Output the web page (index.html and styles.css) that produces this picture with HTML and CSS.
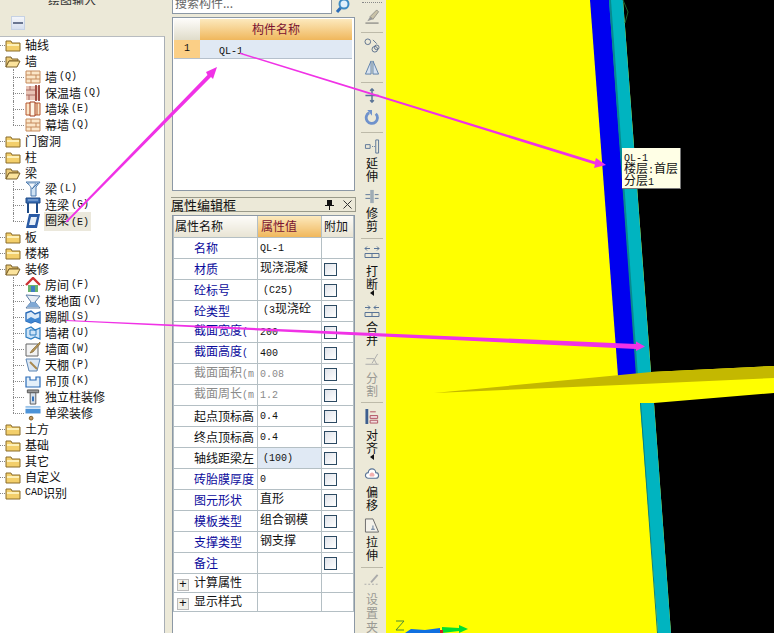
FILE: index.html
```html
<!DOCTYPE html>
<html lang="zh">
<head>
<meta charset="utf-8">
<title>绘图输入</title>
<link rel="stylesheet" href="styles.css">
</head>
<body>
<svg class="defs" width="0" height="0" aria-hidden="true">
  <defs>
    <symbol id="fc" viewBox="0 0 16 14"><path d="M1 3h5l1 2h8v8H1z" fill="#f3cf6b" stroke="#8a6d2b"/><path d="M2 6h12v2H2z" fill="#fdf0b8"/></symbol>
    <symbol id="fo" viewBox="0 0 16 14"><path d="M1 3h5l1 2h6v2H4L1 13z" fill="#eccb78" stroke="#7a6028"/><path d="M4 7h11l-3 6H1z" fill="#fbe39c" stroke="#7a6028"/></symbol>
    <symbol id="brick" viewBox="0 0 16 16"><path d="M1 2h14v12H1z" fill="#fbe6c8" stroke="#c58a5c"/><path d="M1 6h14M1 10h14M6 2v4M11 6v4M6 10v4" stroke="#c58a5c" fill="none"/></symbol>
    <symbol id="ins" viewBox="0 0 16 16"><path d="M1 1h14v14H1z" fill="#e8c3b5"/><path d="M1 5h9M1 10h9M5 1v4M4 10v5" stroke="#a96b62"/><path d="M11 0v16M14 0v16" stroke="#8a2a20" stroke-width="1.5"/></symbol>
    <symbol id="pier" viewBox="0 0 16 16"><path d="M1 2h14v12H1z" fill="#fbe6c8" stroke="#b5562e"/><path d="M5 1h5v14H5z" fill="#fff5e5" stroke="#a23c1d"/><path d="M12 2v12" stroke="#b5562e"/></symbol>
    <symbol id="beam" viewBox="0 0 16 16"><path d="M1 1h14l-4 5v9H6V6z" fill="#cfe2f3" stroke="#4a78ad"/><path d="M3 2l8 0-4 6z" fill="#f4f8fc" stroke="#7d9fc4"/><path d="M7 8L13 2" stroke="#4a78ad"/></symbol>
    <symbol id="lbeam" viewBox="0 0 16 16"><path d="M1 1h14v5H1z" fill="#3c6fb4" stroke="#1f4a86"/><path d="M3 3h10" stroke="#9fc0e6"/><path d="M3 6v10M12 6v10" stroke="#1f4a86" stroke-width="2"/></symbol>
    <symbol id="ring" viewBox="0 0 16 16"><path d="M4 1h11l-3 14H1z" fill="#2b5ba5"/><path d="M6 4h6l-2 8H4z" fill="#e8f0f8"/></symbol>
    <symbol id="room" viewBox="0 0 16 16"><path d="M1 8L8 1l7 7" fill="none" stroke="#c33" stroke-width="2.4"/><path d="M3 8h10v7H3z" fill="#6bb36d"/><path d="M6 9h4v6H6z" fill="#3f7fc4"/></symbol>
    <symbol id="floor" viewBox="0 0 16 16"><path d="M1 2l14 1-5 6 5 6H1l5-6z" fill="#e8eef5" stroke="#5d7ea6"/><path d="M2 14l4-5h4l4 5z" fill="#7fa8d4"/></symbol>
    <symbol id="skirt" viewBox="0 0 16 16"><path d="M1 4l5-2 4 3 5-2v11l-5-2-4 2-5-2z" fill="#dbe9f7" stroke="#2b6cb8" stroke-width="1.4"/><path d="M1 11l5-3 4 2 5-2v6l-5-2-4 2-5-2z" fill="#3f86d1"/></symbol>
    <symbol id="dado" viewBox="0 0 16 16"><path d="M1 4l5-2 4 3 5-2v11l-5-2-4 2-5-2z" fill="#cfe4f7" stroke="#2b7cc0" stroke-width="1.2"/><path d="M5 5h6v5H5z" fill="none" stroke="#2b7cc0"/></symbol>
    <symbol id="wface" viewBox="0 0 16 16"><path d="M1 3h12v12H1z" fill="#f3f3f3" stroke="#666"/><path d="M15 1L7 9l-2 3 3-1 7-8z" fill="#b5965a" stroke="#7a5d25" stroke-width=".6"/></symbol>
    <symbol id="ceil" viewBox="0 0 16 16"><path d="M1 2h14l-3 12H4z" fill="#dbe7f4" stroke="#5d85b3"/><path d="M5 5l7 7" stroke="#a9884e" stroke-width="2"/></symbol>
    <symbol id="susp" viewBox="0 0 16 16"><path d="M1 4h4v3h6V4h4v10H1z" fill="#e3eff9" stroke="#2b6cb8" stroke-width="1.2"/></symbol>
    <symbol id="col" viewBox="0 0 16 17"><path d="M2 1h12v3H2z" fill="#999" stroke="#555"/><path d="M5 4h6v12H5z" fill="#d5dfe9" stroke="#555"/><path d="M7 8h2v5H7z" fill="#2b6cb8"/></symbol>
    <symbol id="sbeam" viewBox="0 0 16 17"><path d="M0 4h16v5H0z" fill="#4c93d8"/><path d="M0 1h16v2H0z" fill="#9cc4e8"/><circle cx="6" cy="14" r="2" fill="#c39660" stroke="#7a5d25"/></symbol>
  </defs>
</svg>
<div class="app">
  <aside class="nav">
    <div class="nav-title">绘图输入</div>
    <div class="nav-tools"><span class="collapse"></span></div>
    <ul class="tree">
      <li class="node"><svg class="folder"><use href="#fc"/></svg>轴线</li>
      <li class="node"><svg class="folder"><use href="#fo"/></svg>墙</li>
      <li class="leaf"><svg class="ico"><use href="#brick"/></svg>墙<span class="lat key">(Q)</span></li>
      <li class="leaf"><svg class="ico"><use href="#ins"/></svg>保温墙<span class="lat key">(Q)</span></li>
      <li class="leaf"><svg class="ico"><use href="#pier"/></svg>墙垛<span class="lat key">(E)</span></li>
      <li class="leaf end"><svg class="ico"><use href="#brick"/></svg>幕墙<span class="lat key">(Q)</span></li>
      <li class="node"><svg class="folder"><use href="#fc"/></svg>门窗洞</li>
      <li class="node"><svg class="folder"><use href="#fc"/></svg>柱</li>
      <li class="node"><svg class="folder"><use href="#fo"/></svg>梁</li>
      <li class="leaf"><svg class="ico"><use href="#beam"/></svg>梁<span class="lat key">(L)</span></li>
      <li class="leaf"><svg class="ico"><use href="#lbeam"/></svg>连梁<span class="lat key">(G)</span></li>
      <li class="leaf end"><svg class="ico"><use href="#ring"/></svg><span class="sel">圈梁<span class="lat key">(E)</span></span></li>
      <li class="node"><svg class="folder"><use href="#fc"/></svg>板</li>
      <li class="node"><svg class="folder"><use href="#fc"/></svg>楼梯</li>
      <li class="node"><svg class="folder"><use href="#fo"/></svg>装修</li>
      <li class="leaf"><svg class="ico"><use href="#room"/></svg>房间<span class="lat key">(F)</span></li>
      <li class="leaf"><svg class="ico"><use href="#floor"/></svg>楼地面<span class="lat key">(V)</span></li>
      <li class="leaf"><svg class="ico"><use href="#skirt"/></svg>踢脚<span class="lat key">(S)</span></li>
      <li class="leaf"><svg class="ico"><use href="#dado"/></svg>墙裙<span class="lat key">(U)</span></li>
      <li class="leaf"><svg class="ico"><use href="#wface"/></svg>墙面<span class="lat key">(W)</span></li>
      <li class="leaf"><svg class="ico"><use href="#ceil"/></svg>天棚<span class="lat key">(P)</span></li>
      <li class="leaf"><svg class="ico"><use href="#susp"/></svg>吊顶<span class="lat key">(K)</span></li>
      <li class="leaf"><svg class="ico"><use href="#col"/></svg>独立柱装修</li>
      <li class="leaf end"><svg class="ico"><use href="#sbeam"/></svg>单梁装修</li>
      <li class="node"><svg class="folder"><use href="#fc"/></svg>土方</li>
      <li class="node"><svg class="folder"><use href="#fc"/></svg>基础</li>
      <li class="node"><svg class="folder"><use href="#fc"/></svg>其它</li>
      <li class="node"><svg class="folder"><use href="#fc"/></svg>自定义</li>
      <li class="node"><svg class="folder"><use href="#fc"/></svg><span class="lat cad">CAD</span>识别</li>
    </ul>
  </aside>

  <section class="mid">
    <div class="search">
      <div class="search-input">搜索构件...</div>
      <div class="search-btn"><svg width="16" height="14" viewBox="0 0 16 14"><circle cx="9" cy="4" r="4.5" fill="#dff0fb" stroke="#3b8ac4" stroke-width="2"/><path d="M5.500 8L2 12" stroke="#2b6cb8" stroke-width="3"/></svg></div>
    </div>
    <div class="list">
      <div class="list-head"><div class="corner"></div><div class="list-title">构件名称</div></div>
      <div class="list-row"><div class="row-no">1</div><div class="row-name"><span class="lat">QL-1</span></div></div>
    </div>
    <div class="prop-title"><span>属性编辑框</span><span class="prop-actions"><svg width="9" height="10" viewBox="0 0 9 10"><path d="M2 0h5v5h2v1H5v4H4V6H0V5h2z" fill="#111"/></svg><svg width="9" height="9" viewBox="0 0 9 9"><path d="M.5.5l8 8M8.500.5l-8 8" stroke="#333" fill="none"/></svg></span></div>
    <div class="prop-wrap">
      <table class="prop">
        <colgroup><col class="c1"><col class="c2"><col class="c3"></colgroup>
        <thead><tr><th class="h1">属性名称</th><th class="h2">属性值</th><th class="h3">附加</th></tr></thead>
        <tbody>
          <tr><td class="name blue">名称</td><td class="val"><span class="lat">QL-1</span></td><td></td></tr>
          <tr><td class="name blue">材质</td><td class="val up">现浇混凝</td><td class="chk"><i></i></td></tr>
          <tr><td class="name blue">砼标号</td><td class="val"><span class="lat pad">(C25)</span></td><td class="chk"><i></i></td></tr>
          <tr><td class="name blue">砼类型</td><td class="val up"><span class="lat pad">(3</span>现浇砼</td><td class="chk"><i></i></td></tr>
          <tr><td class="name blue">截面宽度<span class="lat">(</span></td><td class="val"><span class="lat">200</span></td><td class="chk"><i></i></td></tr>
          <tr><td class="name blue">截面高度<span class="lat">(</span></td><td class="val"><span class="lat">400</span></td><td class="chk"><i></i></td></tr>
          <tr class="off"><td class="name">截面面积<span class="lat">(m</span></td><td class="val"><span class="lat">0.08</span></td><td class="chk"><i></i></td></tr>
          <tr class="off"><td class="name">截面周长<span class="lat">(m</span></td><td class="val"><span class="lat">1.2</span></td><td class="chk"><i></i></td></tr>
          <tr><td class="name">起点顶标高</td><td class="val"><span class="lat">0.4</span></td><td class="chk"><i></i></td></tr>
          <tr><td class="name">终点顶标高</td><td class="val"><span class="lat">0.4</span></td><td class="chk"><i></i></td></tr>
          <tr><td class="name">轴线距梁左</td><td class="val hi"><span class="lat pad">(100)</span></td><td class="chk"><i></i></td></tr>
          <tr><td class="name blue">砖胎膜厚度</td><td class="val"><span class="lat">0</span></td><td class="chk"><i></i></td></tr>
          <tr><td class="name blue">图元形状</td><td class="val up">直形</td><td class="chk"><i></i></td></tr>
          <tr><td class="name blue">模板类型</td><td class="val up">组合钢模</td><td class="chk"><i></i></td></tr>
          <tr><td class="name blue">支撑类型</td><td class="val up">钢支撑</td><td class="chk"><i></i></td></tr>
          <tr><td class="name blue">备注</td><td class="val"></td><td class="chk"><i></i></td></tr>
          <tr class="group"><td class="name"><b class="plus">+</b>计算属性</td><td></td><td></td></tr>
          <tr class="group"><td class="name"><b class="plus">+</b>显示样式</td><td></td><td></td></tr>
        </tbody>
      </table>
    </div>
  </section>

  <nav class="tools">
    <div class="grip"></div>
    <div class="tool m6"><svg viewBox="0 0 16 16"><path d="M1 15h14" stroke="#666"/><path d="M3 13l3-5 3 3z" fill="#999"/><path d="M6 8l7-7 2 2-6 8z" fill="#c9c2a8" stroke="#777" stroke-width=".7"/></svg></div>
    <div class="sep m8"></div>
    <div class="tool m5"><svg viewBox="0 0 16 16" fill="none" stroke="#5b6f8c"><circle cx="3.500" cy="4" r="3"/><circle cx="11" cy="12" r="3"/><circle cx="13" cy="10" r="2.500"/><path d="M9 2l4 4"/></svg></div>
    <div class="tool m7"><svg viewBox="0 0 16 16"><path d="M7 1v14H1z" fill="#d7e2ef" stroke="#5b7ea8"/><path d="M9 1v14h6z" fill="#d7e2ef" stroke="#5b7ea8"/></svg></div>
    <div class="sep m7"></div>
    <div class="tool m5"><svg viewBox="0 0 16 16" fill="none" stroke="#5a7496" stroke-width="1.600"><path d="M8 1v14M1 8h14M6 3l2-2 2 2M6 13l2 2 2-2"/></svg></div>
    <div class="tool m7"><svg viewBox="0 0 16 16" fill="none"><path d="M5 3a6 6 0 1 0 7 1" stroke="#6f92cc" stroke-width="3"/><path d="M3 0h5v6z" fill="#6f92cc"/></svg></div>
    <div class="sep m7"></div>
    <div class="tool m6 g3"><svg viewBox="0 0 16 16" fill="none" stroke="#5a7496"><path d="M12 1h3v14h-3z"/><path d="M1 6h5v4H1z"/><path d="M8 8h3" stroke-dasharray="1 1"/></svg><span>延<br>伸</span></div>
    <div class="tool m7 g3"><svg viewBox="0 0 16 16" fill="none" stroke="#5a7496"><path d="M7 1v14M9 1v14M1 6h5M1 10h5M11 6h4M11 10h4"/></svg><span>修<br>剪</span></div>
    <div class="sep m6"></div>
    <div class="tool m6 g5"><svg viewBox="0 0 16 14" fill="none" stroke="#5a7496"><path d="M1 3h5M10 3h5M3 1L1 3l2 2M13 1l2 2-2 2"/><path d="M1 8h14v4H1zM8 8v4"/></svg><span>打<br>断</span><em></em></div>
    <div class="tool m8 g2"><svg viewBox="0 0 16 14" fill="none" stroke="#5a7496"><path d="M1 3h5M10 3h5M4 1l2 2-2 2M12 1l-2 2 2 2"/><path d="M1 8h14v4H1zM8 8v4"/></svg><span>合<br>并</span></div>
    <div class="tool off m7 g4"><svg viewBox="0 0 16 16" fill="none" stroke="#aaa"><path d="M1 12h14M2 6h8l3 6M14 1l-6 10"/></svg><span>分<br>割</span></div>
    <div class="sep m5"></div>
    <div class="tool m6 g5"><svg viewBox="0 0 16 16"><path d="M1 0h3v16H1z" fill="#3d5f8f"/><path d="M6 3h6M6 7h8v3H6zM6 12h8v3H6z" fill="#f0dede" stroke="#b05060"/></svg><span>对<br>齐</span><em></em></div>
    <div class="tool m7 g4"><svg viewBox="0 0 16 16"><path d="M4 12a3 3 0 0 1 0-6 4 4 0 0 1 8 0 3 3 0 0 1 0 6z" fill="#fff" stroke="#5a7496" stroke-width="1.200"/><path d="M6 10a2 2 0 0 1 0-3 2.500 2.500 0 0 1 4 0 2 2 0 0 1 0 3z" fill="#f3b0b0"/></svg><span>偏<br>移</span></div>
    <div class="tool m7 g3"><svg viewBox="0 0 16 16" fill="none" stroke="#666"><path d="M1 1h8l6 14H1z" fill="#f4f2ea"/><path d="M9 8v4M7 12h4" stroke="#5a7496"/></svg><span>拉<br>伸</span></div>
    <div class="sep m6"></div>
    <div class="tool off m5 g4 tall"><svg viewBox="0 0 16 16" fill="none" stroke="#aaa"><path d="M0 12h16" stroke-dasharray="2 2"/><path d="M7 10L14 2" stroke-width="2"/></svg><span>设<br>置<br>夹<br>点</span></div>
  </nav>

  <main class="canvas">
    <svg class="scene" viewBox="386 0 388 633" preserveAspectRatio="none">
      <rect x="386" y="0" width="388" height="633" fill="#ffff00"/>
      <path d="M623 0H774V366L651 372Z" fill="#000"/>
      <path d="M654 403L774 393V633H671Z" fill="#000"/>
      <path d="M590 0H610L637 376H618Z" fill="#0000f0"/>
      <path d="M609 0H623L651 373L637 376Z" fill="#00b4c0"/>
      <path d="M609 0L611 0L638 376H636Z" fill="#078a8e"/>
      <path d="M640 403H654L671 633H658Z" fill="#00b4c0"/>
      <path d="M640 403H641L658 633H657Z" fill="#0a7f80"/>
      <path d="M434 393L620 375L651 372L774 366V378L620 385Z" fill="#c4b800"/>
      <path d="M623 0L628 12L625 23" fill="none" stroke="#1f5f2a"/>
      <path d="M396 621h8l-8 9h8" fill="none" stroke="#4a8a3a"/>
      <path d="M405 633L411 629L425 630L440 628V633Z" fill="#1070e0"/>
      <path d="M442 627L459 628V625L468 629L459 633V631L442 633Z" fill="#00e030"/>
      <path d="M440 630h3v3h-3z" fill="#d02020"/>
    </svg>
    <div class="tip"><div><span class="lat">QL-1</span></div><div>楼层<span class="lat">:</span>首层</div><div>分层<span class="lat">1</span></div></div>
  </main>

  <svg class="arrows" viewBox="0 0 774 633">
    <path d="M65.500 221.500L207.500 75L206 72L217 67L213 79L211 77L67 222.500Z" fill="#f032e6"/>
    <path d="M240 52.500L595 161.500L596 158L606 165L594 168L595 164.500L240 54Z" fill="#f032e6"/>
    <path d="M66 320L636 344L636 341.500L645 346.500L636 351L636 349L66 321Z" fill="#f032e6"/>
  </svg>
</div>
</body>
</html>
```
FILE: styles.css
```css
* { box-sizing: border-box; }
html, body { margin: 0; height: 100%; }
body { width: 774px; height: 633px; overflow: hidden; font: 12px/16px "Noto Sans CJK SC", "Liberation Sans", sans-serif; color: #111; background: #ece9d8; }
.defs { position: absolute; }
.lat { font-family: "Liberation Mono", monospace; font-size: 10px; }
.lat.pad { margin-left: 3px; }
.key { margin-left: 2px; }
.app { display: flex; position: relative; width: 774px; height: 633px; overflow: hidden; }

/* left tree */
.nav { width: 171px; flex: none; display: flex; flex-direction: column; border-right: 1px solid #ece9d8; background: #ece9d8; }
.nav-title { height: 5px; line-height: 0; padding-left: 48px; font-size: 12px; overflow: hidden; color: #333; }
.nav-tools { height: 31px; padding: 11px 0 0 11px; }
.collapse { display: block; width: 14px; height: 14px; border: 1px solid #c6d2e4; background: linear-gradient(#f4f6fa, #d6dfee); position: relative; }
.collapse::after { content: ""; position: absolute; left: 1px; right: 1px; top: 5px; height: 2px; background: #6a7690; }
.tree { flex: 1; width: 165px; margin: 0; padding: 0; list-style: none; background: #fff; border-right: 1px solid #a8aeb5; border-top: 1px solid #b8bcc0; }
.tree li { height: 16px; display: flex; align-items: center; white-space: nowrap; position: relative; }
.node { padding-left: 5px; }
.node::before { content: ""; position: absolute; left: 0; width: 5px; top: 8px; border-top: 1px dotted #888; }
.leaf { padding-left: 25px; }
.leaf::before { content: ""; position: absolute; left: 13px; width: 11px; top: 8px; border-top: 1px dotted #888; }
.leaf::after { content: ""; position: absolute; left: 13px; top: 0; bottom: 0; border-left: 1px dotted #888; }
.leaf.end::after { bottom: 8px; }
.folder { width: 16px; height: 14px; margin-right: 4px; flex: none; }
.ico { width: 16px; height: 16px; margin-right: 4px; flex: none; }
.sel { background: #ebe8dc; padding: 0 2px 0 1px; margin-left: -1px; }
.cad { font-size: 10px; }

/* middle */
.mid { width: 189px; flex: none; display: flex; flex-direction: column; padding-left: 1px; }
.search { height: 16px; margin-top: -1px; display: flex; width: 181px; }
.search-input { width: 160px; height: 15px; background: #fff; border: 1px solid #8c98a5; border-top: 0; color: #666; line-height: 8px; padding-left: 2px; overflow: hidden; }
.search-btn { width: 21px; height: 15px; display: flex; align-items: center; justify-content: center; background: #ece9d8; }
.list { width: 183px; height: 174px; margin-top: 2px; background: #fff; border: 1px solid #8c98a5; padding: 1px 1px 0 1px; }
.list-head { display: flex; height: 21px; }
.corner { width: 26px; background: linear-gradient(#fdfcf9, #e0dcca); }
.list-title { flex: 1; margin-right: 1px; background: linear-gradient(#fce9bd, #f0b75c); color: #7a1230; text-align: center; line-height: 20px; }
.list-row { display: flex; height: 19px; margin-right: 1px; border-bottom: 1px solid #b5c0cc; }
.row-no { width: 26px; background: #fbcf86; text-align: center; line-height: 18px; font-family: "Liberation Mono", monospace; font-size: 10px; }
.row-name { flex: 1; background: #e0e9f4; padding-left: 19px; line-height: 17px; }
.prop-title { width: 185px; height: 15px; margin-top: 6px; margin-left: -1px; background: #ece9d8; border: 1px solid #9a9a8a; border-left: 0; display: flex; justify-content: space-between; align-items: center; font-size: 13px; padding-right: 3px; }
.prop-actions { display: flex; gap: 9px; align-items: center; }
.prop-wrap { flex: 1; width: 183px; margin-top: 3px; background: #fff; border: 1px solid #8c98a5; border-bottom: 0; }
.prop { width: 180px; table-layout: fixed; border-collapse: collapse; }
.c1 { width: 84px; } .c2 { width: 64px; } .c3 { width: 32px; }
.prop th { height: 21px; padding: 0; font-weight: normal; border: 1px solid #b4bfc4; border-top: 0; font-size: 12px; text-align: left; }
.h1 { background: linear-gradient(#fdfcf9, #e8e4d4); padding-left: 1px !important; }
.h2 { background: linear-gradient(#fce9bd, #f0b75c); color: #7a1230; padding-left: 3px !important; }
.h3 { background: linear-gradient(#fdfcf9, #e8e4d4); padding-left: 2px !important; }
.prop td { height: 21px; padding: 0; border: 1px solid #b4bfc4; white-space: nowrap; overflow: hidden; line-height: 14px; }
.name { padding-left: 20px !important; }
.val { padding-left: 2px !important; }
.up { padding-bottom: 3px !important; }
.blue { color: #0a0a9c; }
.off td { color: #8a8a8a; }
.hi { background: #e0e9f4; }
.chk { text-align: center; }
.chk i { display: block; width: 13px; height: 13px; margin: 1px 0 0 2px; border: 1px solid #2c4a62; background: linear-gradient(135deg, #dfe3ea, #ffffff); }
.group td { height: 19px; padding-top: 1px; }
.group .name { padding-left: 3px !important; }
.plus { display: inline-block; width: 12px; height: 12px; margin-right: 5px; border: 1px solid #bbb; background: #efefe8; font: normal 13px/10px "Liberation Mono", monospace; text-align: center; vertical-align: -1px; }

/* tool strip */
.tools { width: 26px; flex: none; display: flex; flex-direction: column; align-items: center; padding-right: 2px; background: #ece9d8; font-size: 12px; line-height: 12.500px; color: #111; }
.grip { width: 20px; height: 1px; border-top: 1px dotted #888; margin-top: 2px; flex: none; }
.tool { display: flex; flex-direction: column; align-items: center; flex: none; }
.tool svg { width: 16px; height: 15px; flex: none; }
.tool span { display: block; text-align: center; }
.tool.off { color: #9a9a94; }
.tool em { width: 0; height: 0; border: 3px solid transparent; border-right: 4px solid #111; border-left: 0; }
.tall { line-height: 14px; }
.sep { width: 22px; height: 1px; background: #bdbaa9; flex: none; }
.m5 { margin-top: 5px; } .m6 { margin-top: 6px; } .m7 { margin-top: 7px; } .m8 { margin-top: 8px; } .m9 { margin-top: 9px; }
.g2 span { margin-top: 2px; } .g3 span { margin-top: 3px; } .g4 span { margin-top: 4px; } .g5 span { margin-top: 5px; }

/* canvas */
.canvas { flex: 1; position: relative; }
.scene { display: block; width: 100%; height: 100%; }
.tip { position: absolute; left: 236px; top: 148px; width: 59px; height: 41px; padding: 2px 0 0 2px; background: #ffffe6; border-right: 1px solid #777; border-bottom: 1px solid #777; font-size: 12px; white-space: nowrap; }
.tip div { height: 12px; line-height: 12px; }
.arrows { position: absolute; inset: 0; width: 774px; height: 633px; pointer-events: none; }
```
